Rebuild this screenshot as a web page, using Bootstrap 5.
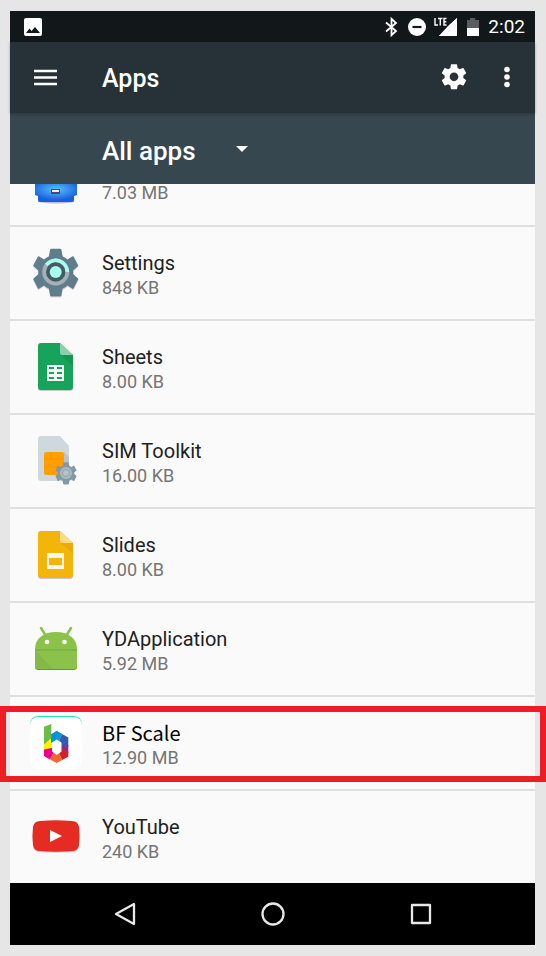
<!DOCTYPE html>
<html lang="en">
<head>
<meta charset="utf-8">
<meta name="viewport" content="width=device-width, initial-scale=1">
<title>Apps</title>
<link rel="stylesheet" href="https://cdn.jsdelivr.net/npm/bootstrap@5.3.0/dist/css/bootstrap.min.css">
<style>
  body { background: #e6e6e6; font-family: Roboto, "Liberation Sans", sans-serif; padding: 11px 11px 11px 10px; }
  svg { display: block; flex: none; }
  .status-strip { background: #12171a; height: 31px; padding: 0 10px 0 14px; font-size: 19px; line-height: 31px; }
  .title-strip { background: #273238; height: 71px; padding: 0 18px 0 21px; box-shadow: 0 1px 3px #0004; z-index: 1; }
  .title-strip h1 { font-size: 25px; line-height: 32px; margin-left: 43px; padding-top: 2px; }
  .gear-btn { margin-right: 28px; }
  .filter-strip { background: #37474f; height: 71px; padding-left: 92px; }
  .filter-strip select { appearance: none; background: none; color: #fff; font-size: 26px; line-height: 32px; font-weight: 500; width: 132px; }
  .plain-btn { background: none; border: 0; padding: 0; color: inherit; }
  .app-row { background: #fafafa; height: 94px; padding: 0 18px; gap: 18px; border-bottom: 2px solid #dfdfdf; color: #212121; }
  .app-row:last-child { height: 92px; border-bottom: 0; }
  .app-row.cut { height: 43px; }
  .app-text { padding-top: 3px; }
  .app-name { font-size: 20px; line-height: 26px; }
  .app-size { font-size: 18px; line-height: 24px; color: #757575; }
  .cut .app-size { line-height: 18px; }
  .alt-name { font-family: "Noto Sans CJK SC", sans-serif; color: #000; }
  .marked::after { content: ""; position: absolute; inset: 9px -11px 7px -10px; border: 6px solid #ee1c25; pointer-events: none; }
  .nav-strip { background: #000; height: 62px; gap: 100px; color: #e8e8e8; }
  .nav-strip button { width: 48px; height: 48px; }
</style>
<script src="https://cdn.jsdelivr.net/npm/bootstrap@5.3.0/dist/js/bootstrap.bundle.min.js"></script>
</head>
<body>
<svg width="0" height="0" class="position-absolute" aria-hidden="true">
  <defs>
    <path id="cog" d="M19.43 12.98c.04-.32.07-.64.07-.98s-.03-.66-.07-.98l2.11-1.65c.19-.15.24-.42.12-.64l-2-3.46c-.12-.22-.39-.3-.61-.22l-2.49 1c-.52-.4-1.08-.73-1.69-.98l-.38-2.65A.488.488 0 0 0 14 2h-4c-.25 0-.46.18-.49.42l-.38 2.65c-.61.25-1.17.59-1.69.98l-2.49-1c-.23-.09-.49 0-.61.22l-2 3.46c-.13.22-.07.49.12.64l2.11 1.65c-.04.32-.07.65-.07.98s.03.66.07.98l-2.11 1.65c-.19.15-.24.42-.12.64l2 3.46c.12.22.39.3.61.22l2.49-1c.52.4 1.08.73 1.69.98l.38 2.65c.03.24.24.42.49.42h4c.25 0 .46-.18.49-.42l.38-2.65c.61-.25 1.17-.59 1.69-.98l2.49 1c.23.09.49 0 .61-.22l2-3.46c.12-.22.07-.49-.12-.64l-2.11-1.65zM12 15.5c-1.93 0-3.5-1.57-3.5-3.5s1.57-3.5 3.5-3.5 3.5 1.57 3.5 3.5-1.57 3.5-3.5 3.5z"/>
    <path id="gearbody" d="M23 4.500H32.500L34 12Q37 13 39.500 15.500L45 12 49.500 20.500 44.500 25V29.500L49.500 34 45 43 39.500 39.500Q37 42 34 43L32.500 50.500H23L21.500 43Q18.500 42 16 39.500L10.500 43 6 34 11 29.500V25L6 20.500 10.500 12 16 15.500Q18.500 13 21.500 12Z" stroke-linejoin="round"/>
    <radialGradient id="blue" cy=".3" r=".6"><stop offset="0" stop-color="#5bc0ff"/><stop offset="1" stop-color="#1660dc"/></radialGradient>
  </defs>
</svg>

<header class="text-white">
  <div class="status-strip d-flex align-items-center">
    <svg width="18" height="18" viewBox="0 0 18 18" role="img" aria-label="Screenshot saved"><rect width="18" height="18" rx="2" fill="#fff"/><path d="M2 15 5.500 10.500 7.500 13l3.500-4 5 6z" fill="#12171a"/></svg>
    <svg class="ms-auto" width="14" height="20" viewBox="0 0 14 20" fill="none" stroke="#fff" stroke-width="1.800" role="img" aria-label="Bluetooth"><path d="M2 5.500 12 14l-4.500 4.200V1.800L12 6 2 14.500"/></svg>
    <svg class="ms-2 me-2" width="20" height="18" viewBox="0 0 20 18" role="img" aria-label="Do not disturb"><circle cx="11" cy="9" r="9" fill="#fff"/><path d="M6.500 9h9" stroke="#12171a" stroke-width="2.200"/></svg>
    <svg width="23" height="20" viewBox="0 0 23 20" fill="#fff" role="img" aria-label="LTE signal"><path d="M23 1v18H5z"/><path d="M0 0h14v9H0z" fill="#12171a"/><path d="M23 1v18H5L14 9z"/><path d="M1 1v7h3M4 1.500h4.500M6.300 1.500V8.500M12.500 1.500H10v6.500h2.500M10 4.700h2.300" fill="none" stroke="#fff" stroke-width="1.400"/></svg>
    <svg class="mx-2" width="15" height="20" viewBox="0 0 15 20" role="img" aria-label="Battery"><path d="M2 3h3V1h5v2h4v8H2z" fill="#5a5d5f"/><path d="M2 11h12v8H2z" fill="#fff"/></svg>
    <time>2:02</time>
  </div>
  <div class="title-strip d-flex align-items-center position-relative">
    <button class="plain-btn" type="button" aria-label="Menu"><svg width="28" height="18" viewBox="0 0 28 18" stroke="#fff" stroke-width="2.300"><path d="M3 2h23M3 8.500h23M3 15h23"/></svg></button>
    <h1 class="fw-medium mb-0 flex-grow-1">Apps</h1>
    <button class="plain-btn gear-btn" type="button" aria-label="Settings"><svg width="30" height="30" viewBox="0 1 24 24" fill="#fff"><use href="#cog"/></svg></button>
    <button class="plain-btn" type="button" aria-label="More options"><svg width="20" height="24" viewBox="0 1 20 24" fill="#fff"><circle cx="10" cy="4.500" r="2.800"/><circle cx="10" cy="12" r="2.800"/><circle cx="10" cy="19.500" r="2.800"/></svg></button>
  </div>
  <div class="filter-strip d-flex align-items-center">
    <select class="border-0 p-0 pt-1" aria-label="Filter apps"><option>All apps</option></select>
    <svg width="16" height="8" viewBox="0 0 16 8" fill="#fff"><path d="M2 1h12L8 7z"/></svg>
  </div>
</header>

<main>
  <ul class="list-unstyled mb-0">
    <li class="app-row cut d-flex">
      <svg width="56" height="20" viewBox="0 0 56 20"><path d="M10 17h36v1q-18 3-36 0z" fill="#bdb5da"/><path d="M7 0h42v11l-3 1v4q0 2-2 2H12q-2 0-2-2v-4l-3-1z" fill="url(#blue)"/><path d="M23 5h9v5h-9z" fill="#4a4388"/><path d="M24 6h7v2h-7z" fill="#eee"/></svg>
      <div class="app-size">7.03 MB</div>
    </li>
    <li class="app-row d-flex align-items-center">
      <svg width="56" height="56" viewBox="0 0 56 56"><use href="#gearbody" y="1" fill="#0003" stroke="#0002" stroke-width="2"/><use href="#gearbody" fill="#607d8b" stroke="#607d8b" stroke-width="1.500"/><circle cx="27.700" cy="27" r="13.500" fill="#a3b1b9"/><path d="M18.500 20A11.600 11.600 0 0 1 39.300 27" fill="none" stroke="#a7ffeb" stroke-width="3.800"/><circle cx="27.700" cy="27" r="9.700" fill="#455a64"/><circle cx="27.700" cy="27" r="6" fill="#a7ffeb"/></svg>
      <div class="app-text"><div class="app-name">Settings</div><div class="app-size">848 KB</div></div>
    </li>
    <li class="app-row d-flex align-items-center">
      <svg width="56" height="56" viewBox="0 0 56 56"><path d="M13 5h19l13 12v32q0 3-3 3H13q-3 0-3-3V8q0-3 3-3z" fill="#0003"/><path d="M13 4h19l13 12v32q0 3-3 3H13q-3 0-3-3V7q0-3 3-3z" fill="#17a35c"/><path d="M33 16h12v11z" fill="#15964f"/><path d="M32 4l13 12H34q-2 0-2-2z" fill="#8dd0ae"/><path d="M19 26h17v16H19z" fill="#f4fbf7"/><path d="M21 28h5v2h-5zM29 28h5v2h-5zM21 33h5v2h-5zM29 33h5v2h-5zM21 38h5v2h-5zM29 38h5v2h-5z" fill="#17a35c"/></svg>
      <div class="app-text"><div class="app-name">Sheets</div><div class="app-size">8.00 KB</div></div>
    </li>
    <li class="app-row d-flex align-items-center">
      <svg width="56" height="56" viewBox="0 0 56 56"><path d="M13 3h19l9 10v32q0 3-3 3H13q-3 0-3-3V6q0-3 3-3z" fill="#cfd8dc"/><path d="M36 19l5 5v14l-5 4z" fill="#b8c4ca"/><rect x="16" y="19" width="20" height="23" rx="2" fill="#ffa000"/><path d="M16 26h20M16 34h20M23 19v7" stroke="#f29500"/><g transform="translate(25.500 28) scale(.450)"><use href="#gearbody" fill="#8399a4" stroke="#8399a4" stroke-width="3"/></g><circle cx="38" cy="40" r="6" fill="#a9bac2"/><circle cx="38" cy="40" r="3.500" fill="#b5c4cb" stroke="#90a4ae"/></svg>
      <div class="app-text"><div class="app-name">SIM Toolkit</div><div class="app-size">16.00 KB</div></div>
    </li>
    <li class="app-row d-flex align-items-center">
      <svg width="56" height="56" viewBox="0 0 56 56"><path d="M13 5h19l13 12v32q0 3-3 3H13q-3 0-3-3V8q0-3 3-3z" fill="#0003"/><path d="M13 4h19l13 12v32q0 3-3 3H13q-3 0-3-3V7q0-3 3-3z" fill="#f4b50b"/><path d="M33 16h12v11z" fill="#eba90a"/><path d="M32 4l13 12H34q-2 0-2-2z" fill="#fbdc86"/><path d="M19 26h17v16H19z" fill="#fff9e8"/><path d="M21 31h13v7H21z" fill="#f4b50b"/></svg>
      <div class="app-text"><div class="app-name">Slides</div><div class="app-size">8.00 KB</div></div>
    </li>
    <li class="app-row d-flex align-items-center">
      <svg width="56" height="56" viewBox="0 0 56 56"><path d="M13 7l5 8M43 7l-5 8" stroke="#8bc34a" stroke-width="2.500" stroke-linecap="round"/><path d="M7 29h42v17q0 3-3 3H10q-3 0-3-3z" fill="#6a9a35"/><path d="M7 28C7 17 16 11 28 11s21 6 21 17v17q0 3-3 3H10q-3 0-3-3z" fill="#8bc34a"/><path d="M7 29l18 19H10q-3 0-3-3z" fill="#84b848"/><path d="M7 29h42" stroke="#73a53b"/><circle cx="19" cy="21" r="2.300" fill="#fff"/><circle cx="36.500" cy="21" r="2.300" fill="#fff"/></svg>
      <div class="app-text"><div class="app-name">YDApplication</div><div class="app-size">5.92 MB</div></div>
    </li>
    <li class="app-row marked d-flex align-items-center position-relative">
      <svg width="56" height="56" viewBox="0 0 56 56"><path d="M2 10q0-9 9-9h34q9 0 9 9z" fill="#1de9b6"/><rect x="2" y="2" width="52" height="52" rx="8" fill="#fff"/><path d="M28.500 32 23 19.500 28.700 16 34 19z" fill="#0095da"/><path d="M28.500 32 34 19l6.300 3.500V32z" fill="#2f5cab"/><path d="M28.500 32 40.300 30v8z" fill="#92278f"/><path d="M28.500 32 40.300 36.500v5.200L34 45z" fill="#d2202f"/><path d="M28.500 32 34 45l-5.300 3-6.700-3.500z" fill="#f1662a"/><path d="M28.500 32 22 44.500 16 41v-8z" fill="#ec008c"/><path d="M28.500 32 16 34.500V28l7-6z" fill="#fff200"/><path d="M23 19.500 28.700 16 34 19l-5 6-6 3z" fill="#0095da"/><path d="M16 11.700 23.300 9v14L16 29.500z" fill="#6cbd45"/><path d="M28.700 24.500l4.800 3v9l-4.800 3.500-4.700-3.500v-9z" fill="#fff"/></svg>
      <div class="app-text"><div class="app-name alt-name">BF Scale</div><div class="app-size">12.90 MB</div></div>
    </li>
    <li class="app-row d-flex align-items-center">
      <svg width="56" height="56" viewBox="0 0 56 56"><path d="M12 13q16-1.500 32 0 6 0 7 6 1 9 0 18-1 6-7 6-16 1.500-32 0-6 0-7-6-1-9 0-18 1-6 7-6z" fill="#0003"/><path d="M12 12q16-1.500 32 0 6 0 7 6 1 9 0 18-1 6-7 6-16 1.500-32 0-6 0-7-6-1-9 0-18 1-6 7-6z" fill="#e62b23"/><path d="M22 21l12 6-12 6z" fill="#fff"/></svg>
      <div class="app-text"><div class="app-name">YouTube</div><div class="app-size">240 KB</div></div>
    </li>
  </ul>
</main>

<nav class="nav-strip d-flex justify-content-center align-items-center" aria-label="System">
  <button class="plain-btn d-grid" type="button" aria-label="Back"><svg class="m-auto" width="24" height="26" viewBox="0 0 24 26" fill="none" stroke="currentColor" stroke-width="2.300" stroke-linejoin="round"><path d="M21 3v20L3 13z"/></svg></button>
  <button class="plain-btn d-grid" type="button" aria-label="Home"><svg class="m-auto" width="26" height="26" viewBox="0 0 26 26" fill="none" stroke="currentColor" stroke-width="2.300"><circle cx="13" cy="13" r="10.500"/></svg></button>
  <button class="plain-btn d-grid" type="button" aria-label="Recent apps"><svg class="m-auto" width="24" height="24" viewBox="0 0 24 24" fill="none" stroke="currentColor" stroke-width="2.300" stroke-linejoin="round"><path d="M3 3h18v18H3z"/></svg></button>
</nav>
</body>
</html>
